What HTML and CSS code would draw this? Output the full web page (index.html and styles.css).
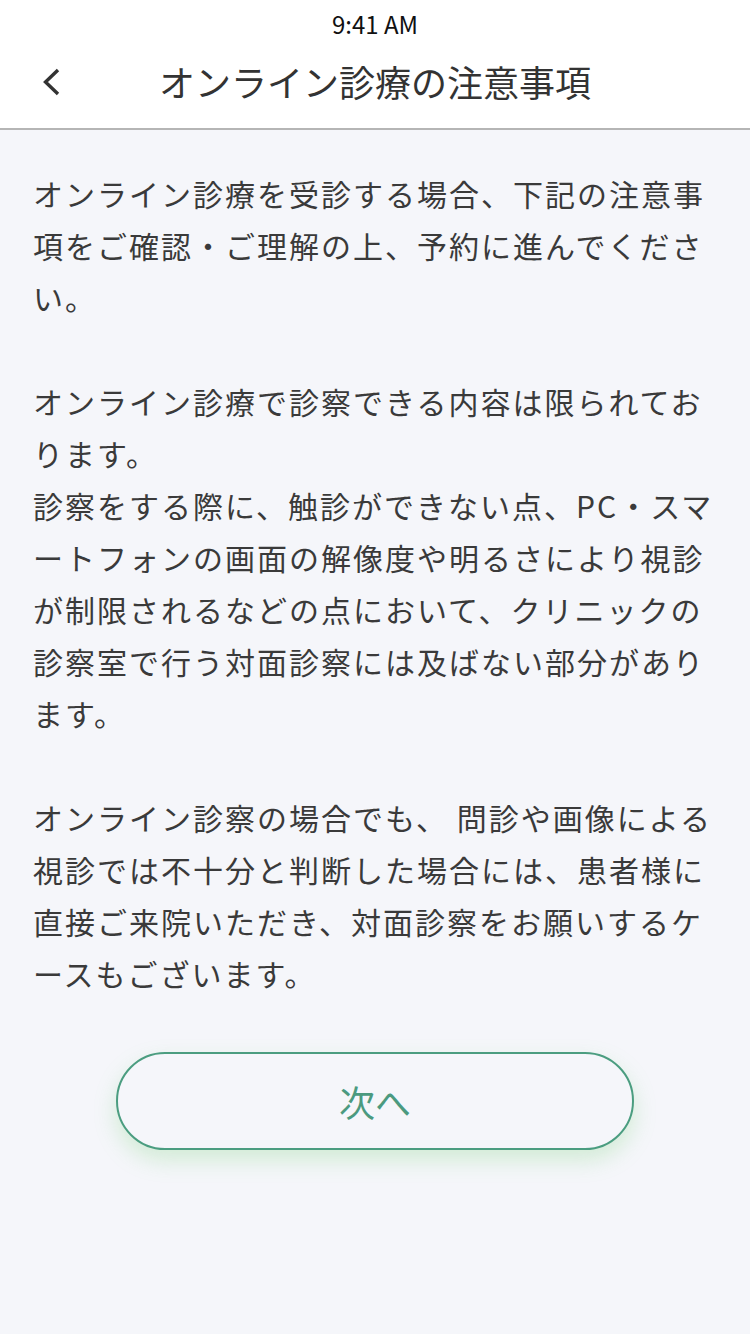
FILE: index.html
```html
<!DOCTYPE html>
<html lang="ja">
<head>
<meta charset="utf-8">
<title>オンライン診療の注意事項</title>
<link rel="stylesheet" href="styles.css">
</head>
<body>
<div class="app">
  <div class="status">9:41 AM</div>
  <header class="nav">
    <button class="back" aria-label="戻る">
      <svg width="18" height="28" viewBox="0 0 18 28"><polyline points="16,2 3.5,14 16,26" fill="none" stroke="#333" stroke-width="3.4"/></svg>
    </button>
    <h1 class="title">オンライン診療の注意事項</h1>
    <span></span>
  </header>
  <main class="content">
    <div class="notes">
      <p>オンライン診療を受診する場合、下記の注意事項をご確認・ご理解の上、予約に進んでください。</p>
      <p>オンライン診療で診察できる内容は限られております。<br>診察をする際に、触診ができない点、PC・スマートフォンの画面の解像度や明るさにより視診が制限されるなどの点において、クリニックの診察室で行う対面診察には及ばない部分があります。</p>
      <p>オンライン診察の場合でも、 問診や画像による視診では不十分と判断した場合には、患者様に直接ご来院いただき、対面診察をお願いするケースもございます。</p>
    </div>
    <div class="actions">
      <button class="next">次へ</button>
    </div>
  </main>
</div>
</body>
</html>
```

FILE: styles.css
```css
html, body {
  margin: 0;
  padding: 0;
}
body {
  font-family: "Noto Sans CJK JP", "Noto Sans", sans-serif;
  background: #f5f6fa;
  color: #3a3a3a;
}
.app {
  width: 750px;
  min-height: 1334px;
  display: flex;
  flex-direction: column;
}
.status {
  height: 48px;
  line-height: 48px;
  background: #fff;
  text-align: center;
  font-size: 24px;
  color: #111;
}
.nav {
  height: 82px;
  padding-bottom: 12px;
  box-sizing: border-box;
  background: #fff;
  border-bottom: 2px solid #b5b5b5;
  display: grid;
  grid-template-columns: 1fr auto 1fr;
  align-items: center;
}
.back {
  justify-self: start;
  margin-left: 42px;
  padding: 0;
  border: 0;
  background: none;
  display: flex;
}
.title {
  margin: 0;
  font-size: 36px;
  font-weight: 400;
  color: #333;
  line-height: 1.2;
}
.content {
  flex: 1;
  padding-top: 37px;
}
.notes {
  padding: 0 17px 0 33px;
  font-size: 30px;
  letter-spacing: 2px;
  line-height: 52px;
  line-break: normal;
  color: #3a3a3a;
}
.notes p {
  margin: 0 0 52px;
}
.notes p:last-child {
  margin-bottom: 0;
}
.actions {
  display: flex;
  justify-content: center;
  margin-top: 53px;
}
.next {
  width: 518px;
  height: 98px;
  box-sizing: border-box;
  border: 2px solid #4b9d80;
  border-radius: 49px;
  background: #f5f6fa;
  color: #4b9a7f;
  font-family: inherit;
  font-size: 36px;
  box-shadow: 0 10px 22px rgba(120, 210, 120, 0.28);
}
```
